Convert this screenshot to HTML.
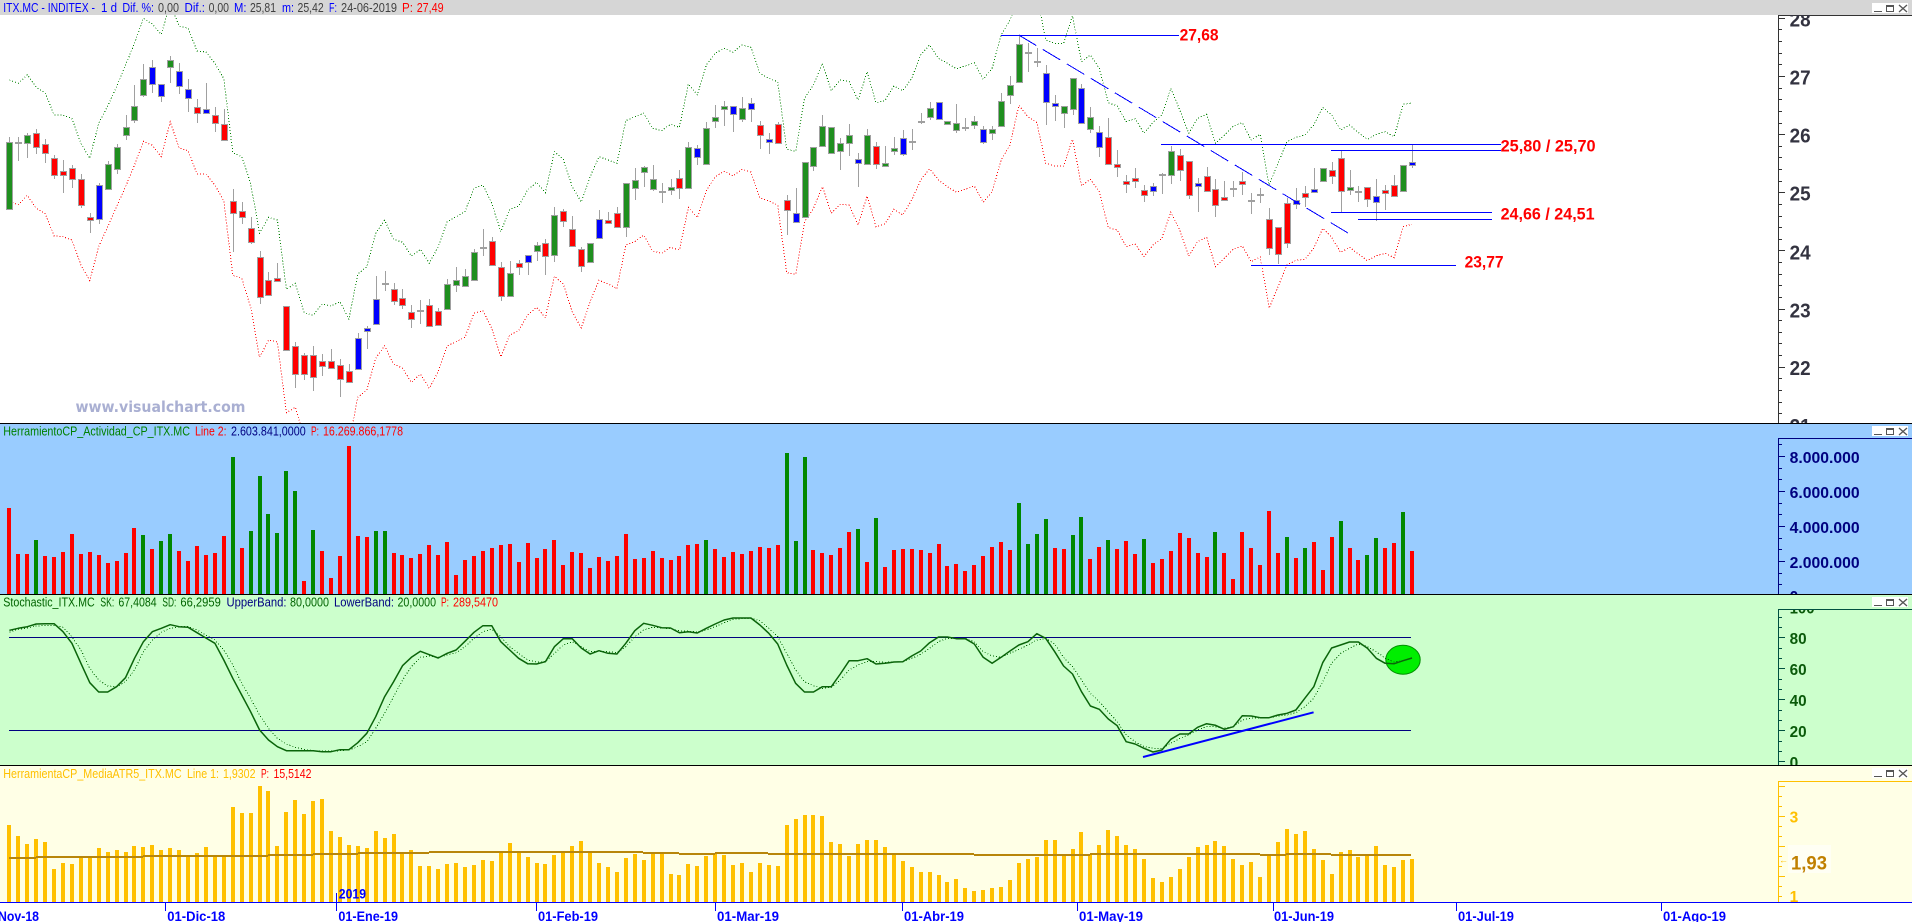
<!DOCTYPE html>
<html><head><meta charset="utf-8"><style>
html,body{margin:0;padding:0;background:#fff;overflow:hidden}
svg{display:block;position:absolute;left:0;top:0}
text{font-family:"Liberation Sans",sans-serif;font-size:13px;white-space:pre}
.a{font-weight:bold;font-size:20px;fill:#333340}
.b{font-weight:bold;font-size:15.5px;fill:#000080}
.c{font-weight:bold;font-size:15.5px;fill:#0a5a0a}
.t{font-weight:bold;font-size:14px;fill:#0000ff}
.r{font-weight:bold;font-size:17px;fill:#ff0000}
</style></head><body>
<svg id="s" width="1912" height="922" viewBox="0 0 1912 922" xmlns="http://www.w3.org/2000/svg">
<defs>
<clipPath id="c1"><rect x="0" y="15" width="1912" height="408"/></clipPath>
<clipPath id="c2"><rect x="0" y="424" width="1912" height="170"/></clipPath>
<clipPath id="c3"><rect x="0" y="610" width="1912" height="155"/></clipPath>
<clipPath id="c4"><rect x="0" y="766" width="1912" height="136"/></clipPath>
</defs>
<rect x="0" y="0" width="1912" height="15" fill="#d6d6d6"/>
<rect x="0" y="15" width="1912" height="408" fill="#fff"/>
<rect x="0" y="424" width="1912" height="170" fill="#99ccff"/>
<rect x="0" y="595" width="1912" height="170" fill="#ccffcc"/>
<rect x="0" y="766" width="1912" height="136" fill="#ffffe6"/>
<rect x="0" y="423" width="1912" height="1" fill="#000"/>
<rect x="0" y="594" width="1912" height="1" fill="#000"/>
<rect x="0" y="765" width="1912" height="1" fill="#000"/>
<g id="g"></g>

<g fill="#0000ff">
<rect x="1001" y="35" width="178" height="1"/>
<rect x="1161" y="144" width="340" height="1"/>
<rect x="1331" y="150" width="170" height="1"/>
<rect x="1331" y="212" width="161" height="1"/>
<rect x="1358" y="219" width="134" height="1"/>
<rect x="1251" y="265" width="205" height="1"/>
</g>
<line x1="1018.8" y1="35" x2="1348" y2="233" stroke="#0000ff" stroke-width="1" stroke-dasharray="20.4 7.6" shape-rendering="crispEdges"/>
<line x1="1143" y1="757" x2="1313.6" y2="712.3" stroke="#0000ff" stroke-width="2"/>

<text class="r" x="1179.6" y="40.5" textLength="39" lengthAdjust="spacingAndGlyphs">27,68</text>
<text class="r" x="1500.6" y="151.5" textLength="95" lengthAdjust="spacingAndGlyphs">25,80 / 25,70</text>
<text class="r" x="1500.6" y="219.5" textLength="94" lengthAdjust="spacingAndGlyphs">24,66 / 24,51</text>
<text class="r" x="1464.6" y="267.5" textLength="39" lengthAdjust="spacingAndGlyphs">23,77</text>

<text x="75.5" y="412" textLength="170" lengthAdjust="spacingAndGlyphs" style="font-family:'DejaVu Sans',sans-serif;font-weight:bold;font-size:15px;fill:#a9afd2">www.visualchart.com</text>

<g>
<text x="3.3" y="12" fill="#0000ff" textLength="91.7" lengthAdjust="spacingAndGlyphs">ITX.MC - INDITEX -</text>
<text x="101" y="12" fill="#0000ff" textLength="16" lengthAdjust="spacingAndGlyphs">1 d</text>
<text x="122.4" y="12" fill="#0000ff" textLength="31.6" lengthAdjust="spacingAndGlyphs">Dif. %:</text>
<text x="158" y="12" fill="#404040" textLength="21" lengthAdjust="spacingAndGlyphs">0,00</text>
<text x="184.5" y="12" fill="#0000ff" textLength="20.5" lengthAdjust="spacingAndGlyphs">Dif.:</text>
<text x="208.6" y="12" fill="#404040" textLength="20.4" lengthAdjust="spacingAndGlyphs">0,00</text>
<text x="234" y="12" fill="#0000ff" textLength="12.5" lengthAdjust="spacingAndGlyphs">M:</text>
<text x="250" y="12" fill="#404040" textLength="26" lengthAdjust="spacingAndGlyphs">25,81</text>
<text x="282" y="12" fill="#0000ff" textLength="12" lengthAdjust="spacingAndGlyphs">m:</text>
<text x="297.5" y="12" fill="#404040" textLength="26.2" lengthAdjust="spacingAndGlyphs">25,42</text>
<text x="329" y="12" fill="#0000ff" textLength="8" lengthAdjust="spacingAndGlyphs">F:</text>
<text x="341" y="12" fill="#404040" textLength="56" lengthAdjust="spacingAndGlyphs">24-06-2019</text>
<text x="402" y="12" fill="#ff0000" textLength="11" lengthAdjust="spacingAndGlyphs">P:</text>
<text x="416.7" y="12" fill="#ff0000" textLength="27" lengthAdjust="spacingAndGlyphs">27,49</text>
</g>
<g>
<text x="3.3" y="435.5" fill="#008000" textLength="186.7" lengthAdjust="spacingAndGlyphs">HerramientoCP_Actividad_CP_ITX.MC</text>
<text x="195" y="435.5" fill="#ff0000" textLength="31.5" lengthAdjust="spacingAndGlyphs">Line 2:</text>
<text x="231" y="435.5" fill="#000080" textLength="74.7" lengthAdjust="spacingAndGlyphs">2.603.841,0000</text>
<text x="311" y="435.5" fill="#ff0000" textLength="8" lengthAdjust="spacingAndGlyphs">P:</text>
<text x="323" y="435.5" fill="#ff0000" textLength="80" lengthAdjust="spacingAndGlyphs">16.269.866,1778</text>
</g>
<g>
<text x="3.3" y="606.5" fill="#006400" textLength="91.4" lengthAdjust="spacingAndGlyphs">Stochastic_ITX.MC</text>
<text x="100.4" y="606.5" fill="#006400" textLength="13.9" lengthAdjust="spacingAndGlyphs">SK:</text>
<text x="118.4" y="606.5" fill="#006400" textLength="38.3" lengthAdjust="spacingAndGlyphs">67,4084</text>
<text x="162.4" y="606.5" fill="#006400" textLength="13.9" lengthAdjust="spacingAndGlyphs">SD:</text>
<text x="180.4" y="606.5" fill="#006400" textLength="40.4" lengthAdjust="spacingAndGlyphs">66,2959</text>
<text x="226.5" y="606.5" fill="#000080" textLength="60" lengthAdjust="spacingAndGlyphs">UpperBand:</text>
<text x="290" y="606.5" fill="#006400" textLength="39" lengthAdjust="spacingAndGlyphs">80,0000</text>
<text x="334" y="606.5" fill="#000080" textLength="60" lengthAdjust="spacingAndGlyphs">LowerBand:</text>
<text x="397.5" y="606.5" fill="#006400" textLength="38.5" lengthAdjust="spacingAndGlyphs">20,0000</text>
<text x="441" y="606.5" fill="#ff0000" textLength="8" lengthAdjust="spacingAndGlyphs">P:</text>
<text x="453" y="606.5" fill="#ff0000" textLength="45" lengthAdjust="spacingAndGlyphs">289,5470</text>
</g>
<g>
<text x="3.3" y="778" fill="#ffc000" textLength="178.3" lengthAdjust="spacingAndGlyphs">HerramientaCP_MediaATR5_ITX.MC</text>
<text x="187" y="778" fill="#ffc000" textLength="32" lengthAdjust="spacingAndGlyphs">Line 1:</text>
<text x="223" y="778" fill="#ffc000" textLength="32.5" lengthAdjust="spacingAndGlyphs">1,9302</text>
<text x="261" y="778" fill="#ff0000" textLength="8" lengthAdjust="spacingAndGlyphs">P:</text>
<text x="273.5" y="778" fill="#ff0000" textLength="37.9" lengthAdjust="spacingAndGlyphs">15,5142</text>
</g>

<g clip-path="url(#c1)">
<text class="a" x="1789.6" y="26.7" textLength="21" lengthAdjust="spacingAndGlyphs">28</text>
<text class="a" x="1789.6" y="84.4" textLength="21" lengthAdjust="spacingAndGlyphs">27</text>
<text class="a" x="1789.6" y="142.7" textLength="21" lengthAdjust="spacingAndGlyphs">26</text>
<text class="a" x="1789.6" y="200.7" textLength="21" lengthAdjust="spacingAndGlyphs">25</text>
<text class="a" x="1789.6" y="259.4" textLength="21" lengthAdjust="spacingAndGlyphs">24</text>
<text class="a" x="1789.6" y="317.4" textLength="21" lengthAdjust="spacingAndGlyphs">23</text>
<text class="a" x="1789.6" y="375" textLength="21" lengthAdjust="spacingAndGlyphs">22</text>
<text class="a" x="1789.6" y="433" textLength="21" lengthAdjust="spacingAndGlyphs">21</text>
</g>
<g clip-path="url(#c2)">
<text class="b" x="1789.6" y="463" textLength="70" lengthAdjust="spacingAndGlyphs">8.000.000</text>
<text class="b" x="1789.6" y="498" textLength="70" lengthAdjust="spacingAndGlyphs">6.000.000</text>
<text class="b" x="1789.6" y="533" textLength="70" lengthAdjust="spacingAndGlyphs">4.000.000</text>
<text class="b" x="1789.6" y="568" textLength="70" lengthAdjust="spacingAndGlyphs">2.000.000</text>
<text class="b" x="1789.6" y="602">0</text>
</g>
<g clip-path="url(#c3)">
<text class="c" x="1789.6" y="613.5" textLength="25" lengthAdjust="spacingAndGlyphs">100</text>
<text class="c" x="1789.6" y="644" textLength="17" lengthAdjust="spacingAndGlyphs">80</text>
<text class="c" x="1789.6" y="675" textLength="17" lengthAdjust="spacingAndGlyphs">60</text>
<text class="c" x="1789.6" y="706" textLength="17" lengthAdjust="spacingAndGlyphs">40</text>
<text class="c" x="1789.6" y="737" textLength="17" lengthAdjust="spacingAndGlyphs">20</text>
<text class="c" x="1789.6" y="768">0</text>
</g>
<g clip-path="url(#c4)">
<text class="b" x="1789.6" y="822.5" style="fill:#ffc000">3</text>
<text class="b" x="1789.6" y="902" style="fill:#ffc000">1</text>
</g>
<rect x="1788" y="845" width="43" height="28" fill="#fffff4"/>
<text x="1791" y="869.5" textLength="36" lengthAdjust="spacingAndGlyphs" style="font-weight:bold;font-size:19px;fill:#c08000">1,93</text>
<text x="1779" y="863" style="font-size:9px;fill:#ffc000">←</text>

<text class="t" x="-2" y="921" textLength="41" lengthAdjust="spacingAndGlyphs">Nov-18</text>
<text class="t" x="167.3" y="921" textLength="58" lengthAdjust="spacingAndGlyphs">01-Dic-18</text>
<text class="t" x="338.4" y="921" textLength="59.6" lengthAdjust="spacingAndGlyphs">01-Ene-19</text>
<text class="t" x="338.8" y="898.5" textLength="27.2" lengthAdjust="spacingAndGlyphs">2019</text>
<text class="t" x="538" y="921" textLength="60" lengthAdjust="spacingAndGlyphs">01-Feb-19</text>
<text class="t" x="717" y="921" textLength="62" lengthAdjust="spacingAndGlyphs">01-Mar-19</text>
<text class="t" x="904" y="921" textLength="60" lengthAdjust="spacingAndGlyphs">01-Abr-19</text>
<text class="t" x="1079" y="921" textLength="64" lengthAdjust="spacingAndGlyphs">01-May-19</text>
<text class="t" x="1274" y="921" textLength="60" lengthAdjust="spacingAndGlyphs">01-Jun-19</text>
<text class="t" x="1458" y="921" textLength="56" lengthAdjust="spacingAndGlyphs">01-Jul-19</text>
<text class="t" x="1663" y="921" textLength="63" lengthAdjust="spacingAndGlyphs">01-Ago-19</text>
</svg>
<script>
var C="G 412 425 628 628;D 412 428 428 482;G 400 406 430 473;R 387 398 442 462;R 418 431 460 488;R 465 473 526 536;R 480 512 526 578;R 495 503 538 563;R 522 536 616 623;R 640 650 661 698;B 550 556 658 671;G 484 493 568 568;G 433 442 508 521;G 346 382 406 419;G 255 317 361 368;G 192 238 284 290;B 181 200 252 280;B 251 251 289 306;G 168 181 202 249;B 190 212 259 282;B 238 268 295 336;R 297 320 340 368;B 250 326 340 340;R 322 344 370 396;R 328 372 421 421;R 568 602 640 755;R 606 632 652 672;R 652 683 727 732;R 754 770 892 912;R 816 839 886 886;R 790 833 844 844;R 917 917 1050 1050;R 1026 1038 1123 1163;R 1060 1064 1123 1140;R 1038 1064 1131 1172;R 1062 1082 1099 1128;R 1047 1082 1104 1104;R 1078 1094 1138 1190;R 1092 1112 1147 1147;B 1000 1013 1108 1108;B 978 983 994 1047;B 828 896 973 973;D 813 852 852 872;R 850 866 904 914;R 867 893 916 926;R 915 935 958 983;D 900 932 932 972;R 898 914 979 979;R 925 932 976 976;G 838 851 928 928;G 801 839 856 876;G 807 827 858 858;G 747 755 841 841;D 687 745 745 768;R 712 722 796 796;R 786 800 888 902;G 783 818 889 889;R 780 788 802 824;B 764 764 787 824;G 727 734 754 782;R 717 728 769 824;G 621 644 766 785;R 628 632 664 681;R 648 686 739 739;R 742 748 799 815;G 728 728 787 787;B 630 656 715 715;R 636 659 664 671;R 621 638 682 682;G 548 548 682 710;G 505 539 565 600;G 497 502 517 560;G 495 536 568 572;D 550 577 577 608;G 538 560 568 585;R 510 533 565 596;G 426 440 565 565;B 435 443 472 495;G 366 385 491 491;G 316 350 364 384;G 304 317 328 378;B 317 317 343 396;G 292 323 358 365;B 295 308 328 365;R 364 374 406 447;B 400 416 427 462;R 365 371 430 430;R 586 599 631 705;B 565 638 667 667;G 485 485 650 650;G 442 442 499 513;G 345 377 439 439;G 380 380 460 460;G 415 428 454 510;G 373 404 430 468;B 460 476 490 560;G 388 404 493 493;R 426 437 493 506;G 438 488 496 496;G 412 443 451 465;B 390 413 463 467;D 388 427 427 450;D 340 367 367 373;G 307 323 352 361;B 305 305 358 358;G 364 364 373 373;G 312 368 391 398;D 354 385 385 392;G 349 362 376 387;B 378 386 427 431;G 378 386 400 420;G 280 302 379 379;G 228 254 285 311;G 107 133 247 247;D 130 158 158 215;D 145 185 185 200;B 195 218 307 375;B 285 308 313 362;G 317 317 340 384;G 233 233 328 345;B 253 263 370 370;G 320 352 388 398;B 378 395 442 470;R 355 410 493 493;R 450 493 502 530;R 525 544 553 578;R 504 535 544 564;R 555 569 586 605;B 550 557 574 587;D 520 525 525 582;G 438 452 526 552;R 447 464 511 543;R 482 482 586 596;B 535 548 559 636;R 502 527 574 574;R 538 566 616 650;R 543 590 601 601;D 543 567 567 590;R 515 544 553 586;D 579 602 602 641;D 564 586 586 608;R 625 658 745 765;R 680 680 763 792;R 595 608 730 744;B 565 600 613 627;R 558 578 592 622;B 505 566 574 574;G 503 503 544 544;R 485 509 529 553;R 452 473 574 636;G 510 560 568 585;D 558 577 577 606;R 560 560 598 622;B 537 587 607 662;R 555 569 577 630;R 525 554 589 589;G 496 496 574 574;B 433 487 493 503".split(";");
var U=[240,250,224,262,278,345,346,355,430,475,370,318,260,195,130,55,72,103,10,78,85,153,156,190,236,458,470,550,700,652,660,868,850,938,946,912,918,905,958,822,800,700,661,718,727,768,748,790,740,665,650,635,565,555,610,695,628,618,570,547,578,455,478,560,606,530,470,480,490,362,350,340,385,392,373,382,252,285,195,160,145,157,135,142,220,235,245,448,454,295,255,190,272,240,245,300,215,308,302,258,272,235,165,135,175,190,206,198,188,238,205,105,60,-10,-40,-20,120,130,130,48,185,165,205,308,318,365,356,400,367,345,265,330,400,355,343,430,405,378,368,420,403,555,490,425,412,405,375,322,345,390,375,398,418,403,395,410,313,309];
var L=[605,614,586,625,640,708,710,720,795,842,740,680,620,560,495,424,436,470,365,444,452,522,522,555,603,826,835,920,1072,1020,1026,1238,1222,1310,1320,1285,1290,1280,1330,1192,1170,1075,1037,1092,1105,1147,1122,1165,1115,1038,1025,1012,940,932,985,1071,1005,992,945,922,953,829,852,935,984,905,841,852,866,735,725,705,753,760,742,750,622,653,572,530,514,528,508,516,594,603,615,818,823,665,625,560,640,613,615,675,588,680,672,628,645,600,540,507,540,560,577,568,558,607,575,480,435,316,350,368,490,498,498,418,557,538,575,683,690,740,732,770,735,715,636,690,768,725,712,800,775,747,738,785,770,925,860,795,781,778,745,685,712,757,742,762,782,767,760,773,680,673];
var V=[265,402,402,-360,408,411,396,342,402,396,405,429,423,399,324,-345,387,-363,-342,393,423,378,405,399,348,-111,384,-333,-168,-282,-339,-153,-213,483,-330,393,474,408,78,348,351,-333,-333,399,405,414,402,375,405,366,465,420,408,393,384,375,372,426,369,414,387,360,435,396,399,444,411,423,408,342,417,414,393,414,420,408,375,372,-360,387,411,396,402,393,381,384,375,-99,-363,-111,390,399,405,384,336,-327,426,-294,441,390,387,387,390,399,372,438,432,453,435,408,381,366,390,-249,-372,-342,-297,384,387,-345,-291,417,381,-360,387,363,402,-357,429,417,393,339,354,399,411,-336,399,477,336,384,435,273,399,-351,414,-384,366,450,351,-303,384,420,-405,-354,384,369,-276,393];
var A=[195,228,252,237,246,327,309,312,294,288,264,276,270,276,258,261,255,270,264,270,285,279,261,285,285,141,159,159,78,93,258,156,120,162,123,117,213,231,255,258,264,213,234,222,276,270,318,318,327,312,309,321,315,300,303,276,249,279,291,309,312,285,279,258,243,276,309,321,336,294,282,300,276,279,342,345,312,318,288,279,285,315,309,336,309,315,318,195,177,165,165,168,246,252,288,252,240,240,261,279,303,321,336,336,345,366,357,384,393,390,384,381,360,309,297,291,240,240,285,267,216,285,255,210,228,255,267,297,354,366,351,327,291,261,255,243,258,297,315,306,351,285,246,207,222,213,267,300,342,276,270,291,288,258,315,321,300,297];
var K=[631,625,620,612,611,611,635,670,730,788,816,816,800,773,715,665,635,625,614,620,622,638,654,670,720,775,825,875,930,960,980,992,992,992,992,995,995,989,989,968,940,890,830,785,737,712,694,704,714,700,690,664,637,617,617,665,690,715,731,732,725,680,656,656,684,702,692,700,702,670,632,610,616,623,624,638,635,639,625,612,600,594,594,594,615,640,672,735,790,816,816,800,800,762,722,722,716,732,730,726,725,708,693,668,651,651,656,656,672,712,730,712,693,675,665,641,655,695,738,762,815,858,868,897,917,965,972,985,996,990,958,942,942,922,911,916,928,920,887,888,893,893,885,880,870,835,800,728,684,675,666,666,685,715,730,731,722,714];
var D=[636,628,624,618,616,616,622,650,690,745,780,798,800,785,750,695,660,637,625,620,620,630,645,660,690,735,790,835,885,925,955,972,982,988,992,993,993,992,990,980,965,925,880,830,780,740,712,708,712,705,698,680,655,635,628,650,680,700,720,726,725,700,675,665,680,695,695,695,698,680,650,630,622,624,626,632,634,636,630,620,608,598,596,595,602,625,650,700,750,785,797,805,802,780,750,735,725,725,727,726,725,715,703,685,665,655,655,655,665,695,708,712,700,688,675,660,655,672,712,740,780,820,845,875,905,945,965,980,985,985,970,955,945,930,920,920,925,920,900,895,893,893,888,885,878,860,835,785,730,700,685,672,680,695,715,726,722,714];
function X(i){return 9.4+8.934*i}
var o=[];
function R(x,y,w,h,f){o.push('<rect x="'+x+'" y="'+y+'" width="'+w+'" height="'+h+'" fill="'+f+'"/>')}
function P(a,y0,cl,col,extra){var d=a.map(function(v,i){return (i?'L':'M')+X(i).toFixed(1)+' '+(y0+v/3).toFixed(1)}).join('');
o.push('<path d="'+d+'" fill="none" stroke="'+col+'" clip-path="url(#'+cl+')" '+extra+'/>')}
o.push('<ellipse cx="1403" cy="659.7" rx="17.2" ry="14.5" fill="#00ee00" stroke="#009000" stroke-width="1"/>');
P(U,0,'c1','#008000','stroke-width="1" stroke-dasharray="1 2" shape-rendering="crispEdges"');
P(L,0,'c1','#ff0000','stroke-width="1" stroke-dasharray="1 2" shape-rendering="crispEdges"');
o.push('<g shape-rendering="crispEdges">');
var col={G:'#1f8f1f',R:'#ff0000',B:'#0000ff'},gray='#a0a0a0';
C.forEach(function(s,i){var p=s.split(' '),x=Math.round(X(i)),h=Math.round(+p[1]/3),t=Math.round(+p[2]/3),b=Math.round(+p[3]/3),l=Math.round(+p[4]/3);
R(x,h,1,Math.max(l-h,1),gray);
if(p[0]=='D'){R(x-3,t-1,7,2,gray)}else{var bh=Math.max(b-t,3);R(x-3,t,7,bh+1,gray);R(x-2,t+1,5,bh-1,col[p[0]])}});
V.forEach(function(v,i){var c=v<0?'#008800':'#ff0000',a=Math.abs(v),t=Math.round(420+a/3);R(Math.round(X(i))-2,t,4,594-t,c)});
A.forEach(function(v,i){var t=Math.round(760+v/3);R(Math.round(X(i))-2,t,4,902-t,'#ffc000')});
R(9,637,1402,1,'#000080');R(9,730,1402,1,'#000080');
var B=[[9,36,857],[36,143,856],[143,268,855],[268,313,854],[313,358,853],[358,429,852],[429,643,851],[643,679,852],[679,715,853],[715,768,852],[768,974,853],[974,1090,854],[1090,1260,853],[1260,1286,854],[1286,1331,853],[1331,1411,854]];
B.forEach(function(b){R(b[0],b[2],b[1]-b[0],2,'#b8860b')});
function axis(c,top,bot,maj,step,n,w){R(1778,top,w||1,bot-top,c);R(1778,top,134,1,c);
for(var k=-n;k<60;k++){var y=Math.round(maj+k*step);if(y<top||y>=bot)continue;R(1778,y,k%n==0?7:4,1,c)}}
axis('#333',15,423,76,11.63,5);
axis('#000080',438,594,456,11.67,3);
axis('#005040',609,765,637.3,10.32,3);
axis('#ffc000',781,902,816,10,3);
R(0,902,1912,1,'#0000ff');
[165,336,536,715,902,1077,1273,1456,1661].forEach(function(x){R(x,902,1,9,'#0000ff')});R(336,893,1,10,'#0000ff');
[3,426,597,768].forEach(function(t){R(1872,t,36,10,'#ffffff');
R(1874,t+8,8,1,'#555');
R(1886,t+2,8,1,'#555');R(1886,t+3,8,1,'#555');R(1886,t+3,1,6,'#555');R(1893,t+3,1,6,'#555');R(1886,t+8,8,1,'#555')});
o.push('</g>');
P(D,420,'c3','#006400','stroke-width="1" stroke-dasharray="1 2" shape-rendering="crispEdges"');
P(K,420,'c3','#0a640a','stroke-width="1.5" stroke-linejoin="round"');
[3,426,597,768].forEach(function(t){o.push('<path d="M1899 '+(t+2)+'L1907 '+(t+9)+'M1907 '+(t+2)+'L1899 '+(t+9)+'" stroke="#555" stroke-width="1.3" fill="none"/>')});
document.getElementById('g').innerHTML=o.join('');
</script>
</body></html>
